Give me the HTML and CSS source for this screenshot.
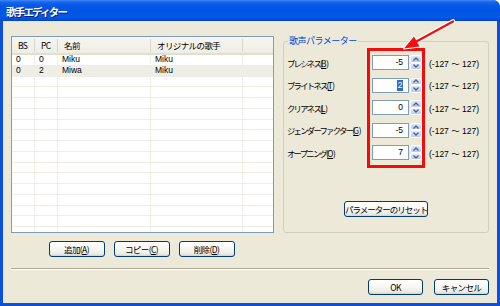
FILE: index.html
```html
<!DOCTYPE html>
<html lang="ja">
<head>
<meta charset="utf-8">
<title>歌手エディター</title>
<link rel="stylesheet" href="styles.css">
</head>
<body>
<div class="window">
  <div class="titlebar"><span class="title">歌手エディター</span></div>
  <div class="client">
    <div class="main">
      <div class="left">
        <div class="list">
          <div class="list-header">
            <div class="hcell">BS</div>
            <div class="hcell">PC</div>
            <div class="hcell">名前</div>
            <div class="hcell">オリジナルの歌手</div>
            <div class="hcell last"></div>
          </div>
          <div class="list-body">
            <div class="row"><div class="cell">0</div><div class="cell">0</div><div class="cell">Miku</div><div class="cell">Miku</div><div class="cell"></div></div>
            <div class="row sel"><div class="cell">0</div><div class="cell">2</div><div class="cell">Miwa</div><div class="cell">Miku</div><div class="cell"></div></div>
            <div class="row"><div class="cell"></div><div class="cell"></div><div class="cell"></div><div class="cell"></div><div class="cell"></div></div>
            <div class="row"><div class="cell"></div><div class="cell"></div><div class="cell"></div><div class="cell"></div><div class="cell"></div></div>
            <div class="row"><div class="cell"></div><div class="cell"></div><div class="cell"></div><div class="cell"></div><div class="cell"></div></div>
            <div class="row"><div class="cell"></div><div class="cell"></div><div class="cell"></div><div class="cell"></div><div class="cell"></div></div>
            <div class="row"><div class="cell"></div><div class="cell"></div><div class="cell"></div><div class="cell"></div><div class="cell"></div></div>
            <div class="row"><div class="cell"></div><div class="cell"></div><div class="cell"></div><div class="cell"></div><div class="cell"></div></div>
            <div class="row"><div class="cell"></div><div class="cell"></div><div class="cell"></div><div class="cell"></div><div class="cell"></div></div>
            <div class="row"><div class="cell"></div><div class="cell"></div><div class="cell"></div><div class="cell"></div><div class="cell"></div></div>
            <div class="row"><div class="cell"></div><div class="cell"></div><div class="cell"></div><div class="cell"></div><div class="cell"></div></div>
            <div class="row"><div class="cell"></div><div class="cell"></div><div class="cell"></div><div class="cell"></div><div class="cell"></div></div>
            <div class="row"><div class="cell"></div><div class="cell"></div><div class="cell"></div><div class="cell"></div><div class="cell"></div></div>
            <div class="row"><div class="cell"></div><div class="cell"></div><div class="cell"></div><div class="cell"></div><div class="cell"></div></div>
            <div class="row"><div class="cell"></div><div class="cell"></div><div class="cell"></div><div class="cell"></div><div class="cell"></div></div>
            <div class="row"><div class="cell"></div><div class="cell"></div><div class="cell"></div><div class="cell"></div><div class="cell"></div></div>
            <div class="row"><div class="cell"></div><div class="cell"></div><div class="cell"></div><div class="cell"></div><div class="cell"></div></div>
          </div>
        </div>
        <div class="list-buttons">
          <button class="btn btn-list">追加(<u>A</u>)</button>
          <button class="btn btn-list">コピー(<u>C</u>)</button>
          <button class="btn btn-list">削除(<u>D</u>)</button>
        </div>
      </div>
      <fieldset class="group">
        <legend class="legend">歌声パラメーター</legend>
        <div class="params">
          <div class="param">
            <span class="plabel">ブレシネス(<u>B</u>)</span>
            <span class="field">-5</span>
            <span class="spin"><span class="sp up"><svg width="6" height="4" viewBox="0 0 6 4"><polyline points="0.5,3.5 3,1 5.5,3.5" fill="none" stroke="#4d6185" stroke-width="1.3"/></svg></span><span class="sp down"><svg width="6" height="4" viewBox="0 0 6 4"><polyline points="0.5,0.5 3,3 5.5,0.5" fill="none" stroke="#4d6185" stroke-width="1.3"/></svg></span></span>
            <span class="range">(-127 〜 127)</span>
          </div>
          <div class="param">
            <span class="plabel">ブライトネス(<u>T</u>)</span>
            <span class="field"><span class="selected">2</span></span>
            <span class="spin"><span class="sp up"><svg width="6" height="4" viewBox="0 0 6 4"><polyline points="0.5,3.5 3,1 5.5,3.5" fill="none" stroke="#4d6185" stroke-width="1.3"/></svg></span><span class="sp down"><svg width="6" height="4" viewBox="0 0 6 4"><polyline points="0.5,0.5 3,3 5.5,0.5" fill="none" stroke="#4d6185" stroke-width="1.3"/></svg></span></span>
            <span class="range">(-127 〜 127)</span>
          </div>
          <div class="param">
            <span class="plabel">クリアネス(<u>L</u>)</span>
            <span class="field">0</span>
            <span class="spin"><span class="sp up"><svg width="6" height="4" viewBox="0 0 6 4"><polyline points="0.5,3.5 3,1 5.5,3.5" fill="none" stroke="#4d6185" stroke-width="1.3"/></svg></span><span class="sp down"><svg width="6" height="4" viewBox="0 0 6 4"><polyline points="0.5,0.5 3,3 5.5,0.5" fill="none" stroke="#4d6185" stroke-width="1.3"/></svg></span></span>
            <span class="range">(-127 〜 127)</span>
          </div>
          <div class="param">
            <span class="plabel">ジェンダーファクター(<u>G</u>)</span>
            <span class="field">-5</span>
            <span class="spin"><span class="sp up"><svg width="6" height="4" viewBox="0 0 6 4"><polyline points="0.5,3.5 3,1 5.5,3.5" fill="none" stroke="#4d6185" stroke-width="1.3"/></svg></span><span class="sp down"><svg width="6" height="4" viewBox="0 0 6 4"><polyline points="0.5,0.5 3,3 5.5,0.5" fill="none" stroke="#4d6185" stroke-width="1.3"/></svg></span></span>
            <span class="range">(-127 〜 127)</span>
          </div>
          <div class="param">
            <span class="plabel">オープニング(<u>O</u>)</span>
            <span class="field">7</span>
            <span class="spin"><span class="sp up"><svg width="6" height="4" viewBox="0 0 6 4"><polyline points="0.5,3.5 3,1 5.5,3.5" fill="none" stroke="#4d6185" stroke-width="1.3"/></svg></span><span class="sp down"><svg width="6" height="4" viewBox="0 0 6 4"><polyline points="0.5,0.5 3,3 5.5,0.5" fill="none" stroke="#4d6185" stroke-width="1.3"/></svg></span></span>
            <span class="range">(-127 〜 127)</span>
          </div>
        </div>
        <div class="reset-wrap">
          <button class="btn btn-reset">パラメーターのリセット</button>
        </div>
      </fieldset>
    </div>
    <div class="separator"></div>
    <div class="dialog-buttons">
      <button class="btn btn-dlg">OK</button>
      <button class="btn btn-dlg">キャンセル</button>
    </div>
    <div class="highlight"></div>
  </div>
  <svg class="arrow" width="62" height="40" viewBox="398 14 62 40">
    <line x1="453" y1="21.5" x2="415" y2="42.3" stroke="#ffffff" stroke-width="4.6" stroke-linecap="round"/>
    <polygon points="404,48.5 419.5,46.5 414,36.5" fill="#ffffff" stroke="#ffffff" stroke-width="2" stroke-linejoin="round"/>
    <line x1="453" y1="21.5" x2="415" y2="42.3" stroke="#f01010" stroke-width="2.4" stroke-linecap="round"/>
    <polygon points="404,48.5 419.5,46.5 414,36.5" fill="#f01010"/>
  </svg>
</div>
</body>
</html>
```

FILE: styles.css
```css
* { box-sizing: border-box; }
html, body { margin: 0; padding: 0; }
body {
  width: 500px;
  height: 306px;
  overflow: hidden;
  font-family: "Liberation Sans", "Noto Sans CJK JP", sans-serif;
  font-size: 9px;
  color: #000;
  background: #ffffff;
}
.window {
  position: relative;
  width: 500px;
  height: 306px;
  display: flex;
  flex-direction: column;
  background: #0c4fdc;
  border-top-right-radius: 7px;
  overflow: hidden;
}
.titlebar {
  height: 21px;
  flex: none;
  background: linear-gradient(#3f8cf3 0px, #1a66ee 2px, #0a58e8 5px, #0054e3 11px, #035ae6 17px, #0049d6 20px, #0040c8 21px);
  padding: 1px 0 0 6px;
  display: flex;
  align-items: center;
}
.title {
  color: #ffffff;
  font-family: "Noto Sans CJK JP", sans-serif;
  font-weight: bold;
  font-size: 10.5px;
  letter-spacing: -1.8px;
  text-shadow: 1px 1px 0 #0a1e7a;
}
.client {
  position: relative;
  flex: 1;
  margin: 0 3px 3px 3px;
  background: #ece9d8;
  padding: 15px 8px 0 8px;
  display: flex;
  flex-direction: column;
}
.main {
  display: flex;
  align-items: flex-start;
  gap: 9px;
}
.left {
  width: 263px;
  display: flex;
  flex-direction: column;
}
.list {
  height: 197px;
  border: 1px solid #7f9db9;
  background: #ffffff;
  overflow: hidden;
}
.list-header {
  height: 18px;
  display: grid;
  grid-template-columns: 23px 23px 93px 92px 1fr;
  align-items: center;
  background: linear-gradient(#f6f5ef, #efeee6);
  border-bottom: 2px solid #e2dfd1;
  font-family: "Noto Sans CJK JP", sans-serif;
  font-size: 8.5px;
  letter-spacing: -0.6px;
}
.hcell {
  height: 13px;
  line-height: 13px;
  border-right: 1px solid #d8d5c9;
  padding-left: 6px;
  white-space: nowrap;
}
.hcell.last { border-right: none; }
.list-body {
  display: flex;
  flex-direction: column;
}
.row {
  height: 10.75px;
  display: grid;
  grid-template-columns: 23px 23px 93px 92px 1fr;
  border-bottom: 1px solid #f0eee4;
  font-size: 8.5px;
  line-height: 9.75px;
}
.row.sel { background: #efeee6; }
.cell {
  border-right: 1px solid #f0eee4;
  padding-left: 4px;
  white-space: nowrap;
}
.cell:last-child { border-right: none; }
.list-buttons {
  margin-top: 8px;
  display: flex;
  justify-content: center;
  gap: 9px;
  padding-right: 2px;
}
.btn {
  font-family: "Noto Sans CJK JP", sans-serif;
  font-size: 8.5px;
  letter-spacing: -0.6px;
  color: #000;
  height: 16px;
  padding: 0;
  border: 1px solid #003c74;
  border-radius: 3px;
  background: linear-gradient(#ffffff 0%, #f7f6f1 50%, #ecebe4 85%, #d6d0c5 100%);
  line-height: 13px;
  white-space: nowrap;
}
.btn u { text-decoration: underline; }
.btn-list { width: 56px; }
.group {
  width: 206px;
  height: 197px;
  margin: 0;
  padding: 0 3px 0 3px;
  border: 1px solid #d0d0bf;
  border-radius: 3px;
  min-width: 0;
}
.legend {
  color: #0046d5;
  font-family: "Noto Sans CJK JP", sans-serif;
  font-size: 9px;
  letter-spacing: -0.5px;
  line-height: 10px;
  padding: 0 1px;
  margin-left: 1px;
}
.params {
  padding-top: 9px;
  display: flex;
  flex-direction: column;
  gap: 7.6px;
}
.param {
  height: 15px;
  display: flex;
  align-items: center;
}
.plabel {
  width: 85px;
  flex: none;
  font-family: "Noto Sans CJK JP", sans-serif;
  font-size: 8.3px;
  letter-spacing: -1.7px;
  white-space: nowrap;
}
.plabel u { letter-spacing: -0.3px; }
.field {
  width: 37px;
  height: 15px;
  flex: none;
  border: 1px solid #7f9db9;
  background: #ffffff;
  text-align: right;
  padding-right: 5px;
  font-size: 8.5px;
  line-height: 13px;
}
.selected {
  display: inline-block;
  background: #316ac5;
  color: #ffffff;
  width: 6px;
  height: 11px;
  line-height: 11px;
  text-align: center;
  vertical-align: middle;
}
.spin {
  width: 12px;
  height: 15px;
  flex: none;
  margin-left: 1px;
  display: flex;
  flex-direction: column;
}
.sp {
  flex: 1;
  display: flex;
  align-items: center;
  justify-content: center;
  background: linear-gradient(#dfe8fd, #b9cbf7);
  border: 1px solid #ffffff;
  border-radius: 2px;
}
.range {
  margin-left: 7px;
  font-family: "Liberation Sans", "Noto Sans CJK JP", sans-serif;
  font-size: 8.5px;
  white-space: nowrap;
}
.reset-wrap {
  margin-top: 41px;
  display: flex;
  justify-content: center;
}
.btn-reset { width: 84px; letter-spacing: -1px; }
.separator {
  margin-top: 11px;
  height: 2px;
  border-top: 1px solid #aca899;
  border-bottom: 1px solid #ffffff;
}
.dialog-buttons {
  margin-top: 9px;
  display: flex;
  justify-content: flex-end;
  gap: 11px;
}
.btn-dlg { width: 55px; }
.highlight {
  position: absolute;
  left: 364px;
  top: 27px;
  width: 58px;
  height: 120px;
  border: 3px solid #f20d0d;
}
.arrow {
  position: absolute;
  left: 398px;
  top: 14px;
}
```
